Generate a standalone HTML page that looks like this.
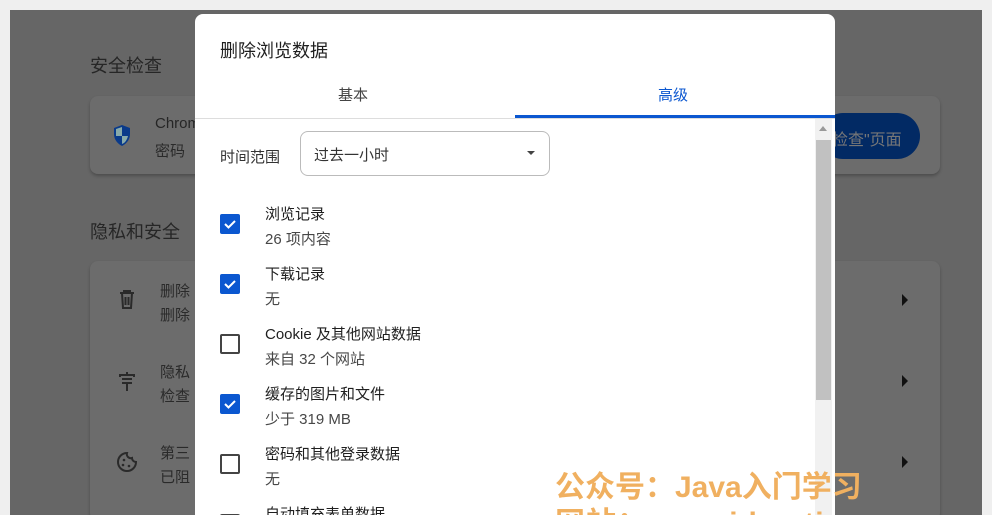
<!DOCTYPE html><html><head><meta charset="utf-8"><style>
*{margin:0;padding:0;box-sizing:border-box}
html,body{width:992px;height:515px;overflow:hidden}
body{background:#efefef;font-family:"Liberation Sans","Noto Sans CJK SC",sans-serif;position:relative}
.bg{position:absolute;left:10px;top:10px;width:972px;height:505px;background:#666}
.a{position:absolute}
.card{position:absolute;background:#6c6c6c;border-radius:8px;box-shadow:0 2px 3px rgba(0,0,0,.25)}
.t{color:#262626;font-size:17px}
.s{color:#2a2a2a;font-size:15px}
.dlg{position:absolute;left:195px;top:14px;width:640px;height:501px;background:#fff;border-radius:8px 8px 0 0;overflow:hidden}
.cb{position:absolute;left:25px;width:20px;height:20px;border-radius:2px}
.on{background:#0b57d0}
.off{border:2px solid #444}
.l1{position:absolute;left:70px;font-size:15px;color:#1f1f1f}
.l2{position:absolute;left:70px;font-size:15px;color:#474747}
.arr{position:absolute;left:902px;width:0;height:0;border-top:6px solid transparent;border-bottom:6px solid transparent;border-left:6px solid #111}
.wm{position:absolute;color:#f0b060;font-weight:bold;font-size:30px;white-space:nowrap}
</style></head><body>
<div class="bg"></div>
<div class="a t" style="left:90px;top:52px;font-size:18px">安全检查</div>
<div class="card" style="left:90px;top:96px;width:850px;height:78px"></div>
<svg class="a" style="left:112px;top:124px" width="20" height="23" viewBox="0 0 20 23"><path d="M10 1L2 4v6c0 6 4 10 8 12 4-2 8-6 8-12V4z" fill="#0a3a8a"/><path d="M10 3v9H4V5zM10 12h6c-1 4-3 7-6 8z" fill="#8aa"/></svg>
<div class="a t" style="left:155px;top:115px;font-size:15px">Chrom</div>
<div class="a s" style="left:155px;top:140px">密码</div>
<div class="a" style="left:820px;top:113px;width:100px;height:46px;background:#022a64;border-radius:23px;color:#777;font-size:16px;padding:13px 0 0 12px">检查"页面</div>
<div class="a t" style="left:90px;top:218px;font-size:18px">隐私和安全</div>
<div class="card" style="left:90px;top:261px;width:850px;height:260px"></div>
<svg class="a" style="left:119px;top:290px" width="16" height="20" viewBox="0 0 16 20"><g fill="none" stroke="#2a2a2a" stroke-width="2"><path d="M1 3h14M5 3V1h6v2M3 3l1 15h8l1-15M6.5 7v8M9.5 7v8"/></g></svg>
<svg class="a" style="left:117px;top:371px" width="20" height="20" viewBox="0 0 20 20"><g fill="none" stroke="#2a2a2a" stroke-width="2"><path d="M10 1v3M3 6V4h14v2M5 8h10M5 12h10M10 12v8"/></g></svg>
<svg class="a" style="left:116px;top:451px" width="22" height="22" viewBox="0 0 22 22"><g fill="none" stroke="#2a2a2a" stroke-width="2"><path d="M11 2a9 9 0 1 0 9 9 4 4 0 0 1-4-4 4 4 0 0 1-5-5z"/></g><circle cx="8" cy="9" r="1.3" fill="#2a2a2a"/><circle cx="7" cy="14" r="1.3" fill="#2a2a2a"/><circle cx="13" cy="15" r="1.3" fill="#2a2a2a"/></svg>
<div class="a s" style="left:160px;top:280px">删除</div><div class="a s" style="left:160px;top:304px">删除</div>
<div class="a s" style="left:160px;top:361px">隐私</div><div class="a s" style="left:160px;top:385px">检查</div>
<div class="a s" style="left:160px;top:442px">第三</div><div class="a s" style="left:160px;top:466px">已阻</div>
<div class="arr" style="top:294px"></div><div class="arr" style="top:375px"></div><div class="arr" style="top:456px"></div>
<div class="dlg">
<div class="a" style="left:25px;top:23px;font-size:18px;color:#1f1f1f">删除浏览数据</div>
<div class="a" style="left:143px;top:70px;font-size:15px;color:#444">基本</div>
<div class="a" style="left:463px;top:70px;font-size:15px;color:#0b57d0">高级</div>
<div class="a" style="left:320px;top:101px;width:320px;height:3px;background:#0b57d0"></div>
<div class="a" style="left:0;top:104px;width:640px;height:1px;background:#ddd"></div>
<div class="a" style="left:620px;top:105px;width:17px;height:420px;background:#f1f1f1"></div>
<div class="a" style="left:621px;top:126px;width:15px;height:260px;background:#c1c1c1"></div>
<div class="a" style="left:624px;top:112px;border-left:4px solid transparent;border-right:4px solid transparent;border-bottom:5px solid #999"></div>
<div class="a" style="left:25px;top:132px;font-size:15px;color:#333">时间范围</div>
<div class="a" style="left:105px;top:117px;width:250px;height:45px;border:1px solid #bbb;border-radius:8px;font-size:15px;color:#333;padding:12px 0 0 13px">过去一小时</div>
<div class="a" style="left:332px;top:137px;border-left:4px solid transparent;border-right:4px solid transparent;border-top:4px solid #444"></div>
<div class="cb on" style="top:200px"></div><div class="l1" style="top:189px">浏览记录</div><div class="l2" style="top:214px">26 项内容</div>
<div class="cb on" style="top:260px"></div><div class="l1" style="top:249px">下载记录</div><div class="l2" style="top:274px">无</div>
<div class="cb off" style="top:320px"></div><div class="l1" style="top:309px">Cookie 及其他网站数据</div><div class="l2" style="top:334px">来自 32 个网站</div>
<div class="cb on" style="top:380px"></div><div class="l1" style="top:369px">缓存的图片和文件</div><div class="l2" style="top:394px">少于 319 MB</div>
<div class="cb off" style="top:440px"></div><div class="l1" style="top:429px">密码和其他登录数据</div><div class="l2" style="top:454px">无</div>
<div class="cb off" style="top:500px"></div><div class="l1" style="top:489px">自动填充表单数据</div>
</div>
<svg class="a" style="left:220px;top:214px" width="20" height="200"><g fill="none" stroke="#fff" stroke-width="2"><path d="M5 10l3.5 3.5L15 7"/><path d="M5 70l3.5 3.5L15 67"/><path d="M5 190l3.5 3.5L15 187"/></g></svg>
<div class="wm" style="left:555px;top:462px">公众号：Java入门学习</div>
<div class="wm" style="left:555px;top:498px;letter-spacing:1px">网站：www.idea-tips.com</div>
</body></html>
